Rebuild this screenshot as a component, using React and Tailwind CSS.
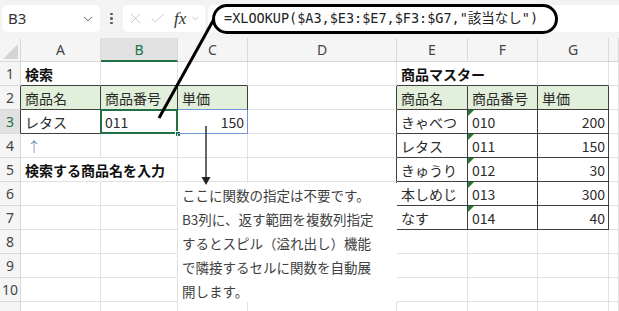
import React from "react";
import { ChevronDown, X, Check } from "lucide-react";

const inT = (r, c) =>
  (r >= 2 && r <= 3 && c >= 1 && c <= 3) || (r >= 2 && r <= 7 && c >= 5 && c <= 7);

const cells = {
  "1-1": { t: "検索", bold: true },
  "2-1": { t: "商品名" },
  "2-2": { t: "商品番号" },
  "2-3": { t: "単価" },
  "3-1": { t: "レタス" },
  "3-2": { t: "011" },
  "3-3": { t: "150", right: true },
  "4-1": { t: "↑", arrow: true },
  "5-1": { t: "検索する商品名を入力", bold: true },
  "1-5": { t: "商品マスター", bold: true },
  "2-5": { t: "商品名" },
  "2-6": { t: "商品番号" },
  "2-7": { t: "単価" },
  "3-5": { t: "きゃべつ" },
  "3-6": { t: "010", tri: true },
  "3-7": { t: "200", right: true },
  "4-5": { t: "レタス" },
  "4-6": { t: "011", tri: true },
  "4-7": { t: "150", right: true },
  "5-5": { t: "きゅうり" },
  "5-6": { t: "012", tri: true },
  "5-7": { t: "30", right: true },
  "6-5": { t: "本しめじ" },
  "6-6": { t: "013", tri: true },
  "6-7": { t: "300", right: true },
  "7-5": { t: "なす" },
  "7-6": { t: "014", tri: true },
  "7-7": { t: "40", right: true },
};

const LETTERS = ["", "A", "B", "C", "D", "E", "F", "G", ""];

function HeaderCell({ c }) {
  if (c === 0) {
    return (
      <div className="relative bg-[#f5f5f5] border-r border-b border-r-[#d6d6d6] border-b-[#d6d6d6]">
        <svg className="absolute left-0 top-0" width="20" height="23">
          <polygon points="3,21 18,21 18,6" fill="#d4d4d4" />
        </svg>
      </div>
    );
  }
  const sel = c === 2;
  return (
    <div
      className={`flex items-center justify-center text-[14px] font-['Noto_Sans',sans-serif] border-r border-r-[#dadada] ${
        sel
          ? "bg-[#e1e1e1] text-[#217346] border-b-2 border-b-[#217346]"
          : "bg-[#f5f5f5] text-[#444] border-b border-b-[#d6d6d6]"
      }`}
    >
      {LETTERS[c]}
    </div>
  );
}

function RowHeader({ r }) {
  const dark = inT(r, 1);
  const sel = r === 3;
  return (
    <div
      className={`flex items-center justify-center text-[14px] font-['Noto_Sans',sans-serif] border-r border-b border-b-[#dadada] ${
        dark ? "border-r-[#3f3f3f]" : "border-r-[#d6d6d6]"
      } ${sel ? "bg-[#e1e1e1] text-[#217346]" : "bg-[#f5f5f5] text-[#444]"}`}
    >
      {r <= 10 ? r : ""}
    </div>
  );
}

function Cell({ r, c }) {
  const d = cells[`${r}-${c}`];
  const inTable = inT(r, c);
  let rb = inT(r, c) || inT(r, c + 1) ? "border-r-[#3f3f3f]" : "border-r-[#e1e1e1]";
  let bb = inT(r, c) || inT(r + 1, c) ? "border-b-[#3f3f3f]" : "border-b-[#e1e1e1]";
  if ((r === 5 && c === 1) || (r === 1 && c === 5)) rb = "border-r-transparent";
  if (r === 3 && c === 3) {
    rb = "border-r-[#7097d8]";
    bb = "border-b-[#7097d8]";
  }
  if (r === 2 && c === 3) bb = "border-b-[#7097d8]";
  const bg = r === 2 && inTable ? "bg-[#e2efda]" : "";
  const isSel = r === 3 && c === 2;
  return (
    <div
      className={`relative flex items-center min-w-0 whitespace-nowrap border-r border-b ${rb} ${bb} ${bg} ${
        d && d.right ? "justify-end pr-[3px]" : "pl-[4px]"
      }`}
    >
      {d && d.tri && (
        <div className="absolute left-0 top-0 w-0 h-0 border-t-[6px] border-r-[6px] border-t-[#1e7b34] border-r-transparent" />
      )}
      {d && (
        <span
          className={`text-[14px] leading-none ${d.bold ? "font-bold text-[#111]" : "text-[#2b2b2b]"} ${
            d.arrow ? "!text-[#5c7fae] font-light pl-[2px]" : ""
          }`}
        >
          {d.t}
        </span>
      )}
      {isSel && (
        <>
          <div className="absolute -left-[1px] -top-[1px] -right-[1px] -bottom-[1px] border-2 border-[#1f7145]" />
          <div className="absolute -right-[4px] -bottom-[4px] w-[6px] h-[6px] bg-[#1f7145] border border-white" />
        </>
      )}
    </div>
  );
}

export default function App() {
  const rows = [];
  for (let r = 0; r <= 11; r++) {
    for (let c = 0; c <= 8; c++) {
      const key = `${r}-${c}`;
      if (r === 0) rows.push(<HeaderCell key={key} c={c} />);
      else if (c === 0) rows.push(<RowHeader key={key} r={r} />);
      else rows.push(<Cell key={key} r={r} c={c} />);
    }
  }

  return (
    <div className="relative w-[619px] h-[311px] overflow-hidden bg-white font-['Noto_Sans_CJK_JP',sans-serif]">
      {/* formula bar */}
      <div className="flex items-center h-[38px] bg-[#f3f3f3] pb-[1px]">
        <div className="ml-[2px] w-[98px] h-[27px] rounded-[5px] bg-white flex items-center justify-between pl-[6px] pr-[5px]">
          <span className="text-[15px] text-[#333] font-['Noto_Sans',sans-serif]">B3</span>
          <ChevronDown size={14} strokeWidth={1.6} color="#555" />
        </div>
        <div className="w-[23px] flex flex-col items-center gap-[2px]">
          <div className="w-[2.5px] h-[2.5px] rounded-full bg-[#555]" />
          <div className="w-[2.5px] h-[2.5px] rounded-full bg-[#555]" />
          <div className="w-[2.5px] h-[2.5px] rounded-full bg-[#555]" />
        </div>
        <div className="w-[82px] h-[27px] rounded-[5px] bg-white flex items-center pl-[4px]">
          <X size={17} strokeWidth={1.1} color="#b8b8b8" />
          <Check size={17} strokeWidth={1.1} color="#b8b8b8" className="ml-[5px]" />
          <span className="ml-[8px] text-[17px] italic text-[#333] font-['Liberation_Serif',serif] leading-none">
            fx
          </span>
          <ChevronDown size={11} strokeWidth={1.3} color="#999" className="ml-[4px]" />
        </div>
        <div className="ml-[3px] flex-1 h-[27px] rounded-l-[5px] bg-white flex items-center pl-[16px]">
          <span className="text-[13.5px] text-[#222] whitespace-nowrap font-['DejaVu_Sans_Mono','Noto_Sans_CJK_JP',monospace]">
            =XLOOKUP($A3,$E3:$E7,$F3:$G7,"該当なし")
          </span>
        </div>
      </div>

      {/* sheet grid */}
      <div className="grid grid-cols-[21px_80px_77px_70px_149px_71px_70px_71px_1fr] grid-rows-[24px_repeat(11,24px)]">
        {rows}
      </div>

      {/* text box shape */}
      <div className="absolute left-[178px] top-[183px] w-[219px] h-[119px] bg-white pl-[4px] text-[13.5px] text-[#404040] leading-[24px] whitespace-nowrap">
        <div>ここに関数の指定は不要です。</div>
        <div>B3列に、返す範囲を複数列指定</div>
        <div>するとスピル（溢れ出し）機能</div>
        <div>で隣接するセルに関数を自動展</div>
        <div>開します。</div>
      </div>

      {/* callout ellipse */}
      <div className="absolute left-[212px] top-[4px] w-[346px] h-[30px] border-[3px] border-black rounded-[15px]" />

      {/* lines */}
      <svg className="absolute left-0 top-0 pointer-events-none" width="619" height="311">
        <line x1="214" y1="19" x2="159" y2="118" stroke="#000" strokeWidth="3" />
        <line x1="206" y1="126" x2="206" y2="178" stroke="#333" strokeWidth="1.5" />
        <polygon points="201.5,177 210.5,177 206,185" fill="#222" />
      </svg>
    </div>
  );
}
